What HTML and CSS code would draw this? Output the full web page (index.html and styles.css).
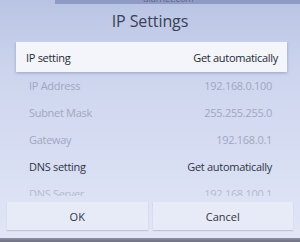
FILE: index.html
```html
<!DOCTYPE html>
<html lang="en">
  <head>
    <meta charset="utf-8">
    <title>IP Settings</title>
    <link rel="stylesheet" href="styles.css">
  </head>
  <body>
    <div class="topstrip"><span>ularnet.com</span></div>
    <h1 class="title">IP Settings</h1>
    <div class="list">
      <div class="row selected">
        <span>IP setting</span>
        <span>Get automatically</span>
      </div>
      <div class="row dim">
        <span>IP Address</span>
        <span>192.168.0.100</span>
      </div>
      <div class="row dim">
        <span>Subnet Mask</span>
        <span>255.255.255.0</span>
      </div>
      <div class="row dim">
        <span>Gateway</span>
        <span>192.168.0.1</span>
      </div>
      <div class="row">
        <span>DNS setting</span>
        <span>Get automatically</span>
      </div>
      <div class="row dim faded">
        <span>DNS Server</span>
        <span>192.168.100.1</span>
      </div>
    </div>
    <div class="buttons">
      <div class="btn">OK</div>
      <div class="btn">Cancel</div>
    </div>
    <div class="bottomstrip"></div>
  </body>
</html>
```

FILE: styles.css
```css
html, body {
  margin: 0;
  height: 242px;
  overflow: hidden;
}
body {
  font-family: "Open Sans", "Noto Sans", sans-serif;
  background: linear-gradient(180deg, #b9c4e4 0%, #cdd5ee 30%, #d9dff3 70%, #e2e6f6 100%);
  color: #33384c;
}
.topstrip {
  height: 4px;
  margin-left: 55px;
  background: #8f9bc4;
  position: relative;
  overflow: hidden;
}
.topstrip span {
  position: absolute;
  left: 88px;
  top: -8px;
  font-size: 9px;
  color: #5c6688;
}
.title {
  margin: 6px 0 0;
  height: 31px;
  font-size: 16px;
  font-weight: normal;
  text-align: center;
  color: #3b4056;
  letter-spacing: -0.1px;
}
.list {
  height: 154px;
  overflow: hidden;
  margin: 1px 0 0;
}
.row {
  display: flex;
  justify-content: space-between;
  align-items: center;
  height: 27px;
  padding: 0 28px 0 29px;
  font-size: 11px;
  letter-spacing: -0.3px;
  color: #2f3447;
}
.row.selected {
  height: 30px;
  margin: 0 13px 0 16px;
  padding: 0 9px 0 10px;
  background: #f3f5fb;
  box-shadow: 0 1px 3px rgba(60, 70, 110, 0.35);
  color: #242939;
}
.row.dim {
  color: #a1a7bf;
}
.row.faded {
  color: #b4bad0;
}
.buttons {
  display: flex;
  gap: 5px;
  padding: 6px 7px 0 7px;
}
.btn {
  flex: 1;
  height: 28px;
  display: flex;
  align-items: center;
  justify-content: center;
  background: #e7ebf7;
  font-size: 11px;
  color: #2f3447;
  box-shadow: 0 1px 1px rgba(90, 100, 140, 0.25);
}
.bottomstrip {
  margin-top: 8px;
  height: 6px;
  background: linear-gradient(180deg, #8c90a4, #5a5c6c);
}
```
